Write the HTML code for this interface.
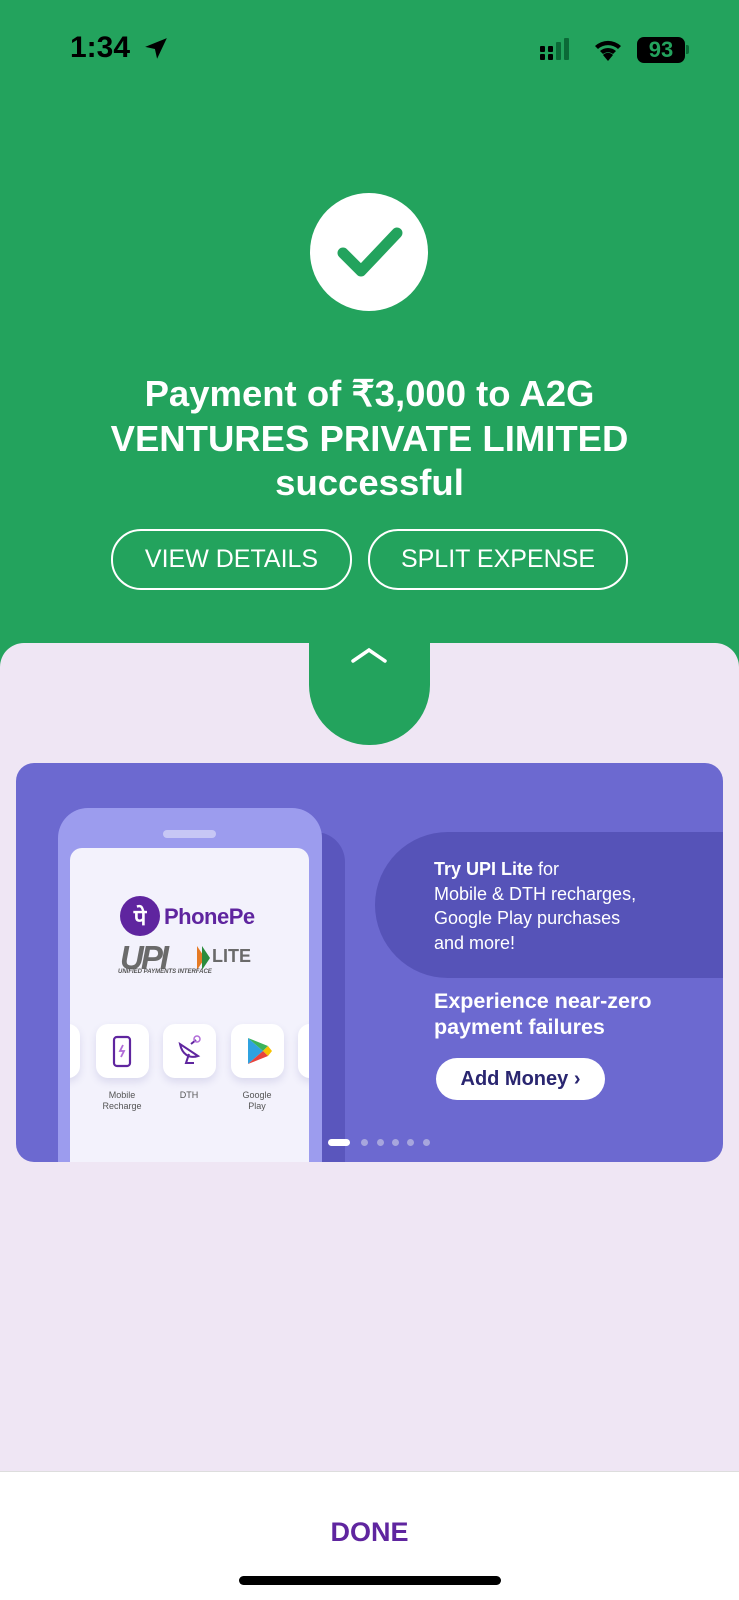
<!DOCTYPE html>
<html><head><meta charset="utf-8"><style>
*{margin:0;padding:0;box-sizing:border-box}
body{width:739px;height:1600px;position:relative;overflow:hidden;background:#23a35d;font-family:"Liberation Sans",sans-serif}
.a{position:absolute}
.btn{position:absolute;border:2px solid #fff;border-radius:30px;color:#fff;font-size:25px;display:flex;align-items:center;justify-content:center;height:61px;top:529px}
.tile{position:absolute;top:261px;width:53px;height:54px;background:#fff;border-radius:12px;box-shadow:0 4px 8px rgba(80,80,160,.15)}
.lbl{position:absolute;top:325px;font-size:9px;color:#555;text-align:center;line-height:11px;width:70px}
.dot{position:absolute;top:376px;width:7px;height:7px;border-radius:50%;background:#a7a6dd}
</style></head><body>
<div class="a" style="left:70px;top:31px;font-size:30px;font-weight:bold;color:#000">1:34</div>
<svg class="a" style="left:143px;top:36px" width="26" height="26" viewBox="0 0 24 24"><path d="M22 2L2 10l9 2 2 9z" fill="#000"/></svg>
<svg class="a" style="left:540px;top:38px" width="32" height="24"><rect x="0" y="8" width="5" height="6" rx="1"/><rect x="0" y="16" width="5" height="6" rx="1"/><rect x="8" y="8" width="5" height="6" rx="1"/><rect x="8" y="16" width="5" height="6" rx="1"/><rect x="16" y="4" width="5" height="18" rx="1" fill="#0b6a37"/><rect x="24" y="0" width="5" height="22" rx="1" fill="#0b6a37"/></svg>
<svg class="a" style="left:592px;top:36px" width="32" height="26" viewBox="0 0 32 26"><path d="M16 25l5-6a7 7 0 0 0-10 0z M3 10a19 19 0 0 1 26 0l-3 3a15 15 0 0 0-20 0z M8 15a12 12 0 0 1 16 0l-3 3a8 8 0 0 0-10 0z" fill="#000"/></svg>
<div class="a" style="left:637px;top:37px;width:48px;height:26px;background:#000;border-radius:7px;color:#23a35d;font-weight:bold;font-size:22px;text-align:center;line-height:26px">93</div>
<div class="a" style="left:686px;top:45px;width:3px;height:9px;background:#0b6a37;border-radius:0 2px 2px 0"></div>
<div class="a" style="left:310px;top:193px;width:118px;height:118px;border-radius:50%;background:#fff"></div>
<svg class="a" style="left:310px;top:193px" width="118" height="118"><path d="M33 60l18 18 36-38" stroke="#23a35d" stroke-width="11" fill="none" stroke-linecap="round" stroke-linejoin="round"/></svg>
<div class="a" style="left:0;top:372px;width:739px;text-align:center;color:#fff;font-weight:bold;font-size:36.5px;line-height:44.5px">Payment of ₹3,000 to A2G<br>VENTURES PRIVATE LIMITED<br>successful</div>
<div class="btn" style="left:111px;width:241px">VIEW DETAILS</div>
<div class="btn" style="left:368px;width:260px">SPLIT EXPENSE</div>
<div class="a" style="left:0;top:643px;width:739px;height:900px;background:#efe6f4;border-radius:24px 24px 0 0"></div>
<div class="a" style="left:309px;top:600px;width:121px;height:145px;background:#23a35d;border-radius:0 0 60px 60px"></div>
<svg class="a" style="left:350px;top:645px" width="38" height="20"><path d="M3 16l16-11 16 11" stroke="#fff" stroke-width="3.5" fill="none" stroke-linecap="round"/></svg>
<div class="a" style="left:16px;top:763px;width:707px;height:399px;background:#6c69d0;border-radius:18px;overflow:hidden">
 <div class="a" style="left:359px;top:69px;width:400px;height:146px;background:#5653b8;border-radius:73px 0 0 73px"></div>
 <div class="a" style="left:80px;top:69px;width:249px;height:400px;background:#5a56bd;border-radius:30px"></div>
 <div class="a" style="left:42px;top:45px;width:264px;height:400px;background:#9c9cee;border-radius:30px"></div>
 <div class="a" style="left:147px;top:67px;width:53px;height:8px;background:#c7c7f5;border-radius:4px"></div>
 <div class="a" style="left:54px;top:85px;width:239px;height:400px;background:#f3f2fc;border-radius:12px;overflow:hidden">
  <div class="a" style="left:50px;top:48px;width:40px;height:40px;border-radius:50%;background:#5f259f;color:#fff;font-size:22px;text-align:center;line-height:40px;font-weight:bold;font-family:'Noto Sans CJK SC',sans-serif">पे</div>
  <div class="a" style="left:94px;top:56px;color:#5f259f;font-weight:bold;font-size:22px;letter-spacing:-0.5px">PhonePe</div>
  <div class="a" style="left:50px;top:91px;color:#6a6a6a;font-weight:bold;font-style:italic;font-size:33px;letter-spacing:-3px">UPI</div>
  <svg class="a" style="left:127px;top:98px" width="14" height="24"><path d="M0 0l8 12-8 12z" fill="#e57a24"/><path d="M5 0l8 12-8 12z" fill="#2a8c3c"/></svg>
  <div class="a" style="left:142px;top:98px;color:#6a6a6a;font-weight:bold;font-size:18px">LITE</div>
  <div class="a" style="left:48px;top:121px;color:#555;font-style:italic;font-size:6px;font-weight:bold">UNIFIED PAYMENTS INTERFACE</div>
  <div class="tile" style="left:-20px;top:176px;width:30px"></div>
  <div class="tile" style="left:26px;top:176px"></div>
  <div class="tile" style="left:93px;top:176px"></div>
  <div class="tile" style="left:161px;top:176px"></div>
  <div class="tile" style="left:228px;top:176px;width:30px"></div>
  <svg class="a" style="left:40px;top:186px" width="24" height="36"><rect x="4" y="3" width="16" height="29" rx="3" stroke="#5f259f" stroke-width="2.2" fill="none"/><path d="M13 11l-3 6h4l-3 6" stroke="#b06bd8" stroke-width="1.8" fill="none"/></svg>
  <svg class="a" style="left:105px;top:186px" width="30" height="36"><path d="M5 10c2 10 9 15 18 12z M14 20l-3 9h8 M16 10l5-4" stroke="#5f259f" stroke-width="2" fill="none"/><circle cx="22" cy="5" r="3" stroke="#b06bd8" stroke-width="1.5" fill="none"/></svg>
  <svg class="a" style="left:176px;top:188px" width="26" height="30"><path d="M2 2l15 13L2 28z" fill="#2fa2e0"/><path d="M2 2l15 13 5-5z" fill="#3bb35b"/><path d="M17 15l5-5 4 5-4 5z" fill="#f7c200"/><path d="M2 28l15-13 5 5z" fill="#e8433b"/></svg>
  <div class="lbl" style="left:17px;top:242px">Mobile<br>Recharge</div>
  <div class="lbl" style="left:84px;top:242px">DTH</div>
  <div class="lbl" style="left:152px;top:242px">Google<br>Play</div>
 </div>
 <div class="a" style="left:418px;top:94px;color:#fff;font-size:18px;line-height:24.5px"><b>Try UPI Lite</b> for<br>Mobile &amp; DTH recharges,<br>Google Play purchases<br>and more!</div>
 <div class="a" style="left:418px;top:225px;color:#fff;font-size:21.5px;font-weight:bold;line-height:26px">Experience near-zero<br>payment failures</div>
 <div class="a" style="left:420px;top:295px;width:169px;height:42px;background:#fff;border-radius:21px;color:#2a2670;font-size:20px;font-weight:bold;text-align:center;line-height:42px">Add Money ›</div>
 <div class="a" style="left:312px;top:376px;width:22px;height:7px;border-radius:4px;background:#fff"></div>
 <div class="dot" style="left:345px"></div><div class="dot" style="left:361px"></div><div class="dot" style="left:376px"></div><div class="dot" style="left:391px"></div><div class="dot" style="left:407px"></div>
</div>
<div class="a" style="left:0;top:1471px;width:739px;height:129px;background:#fff;border-top:1px solid #ddd"></div>
<div class="a" style="left:0;top:1517px;width:739px;text-align:center;color:#5f259f;font-weight:bold;font-size:27px">DONE</div>
<div class="a" style="left:239px;top:1576px;width:262px;height:9px;border-radius:5px;background:#000"></div>
</body></html>
